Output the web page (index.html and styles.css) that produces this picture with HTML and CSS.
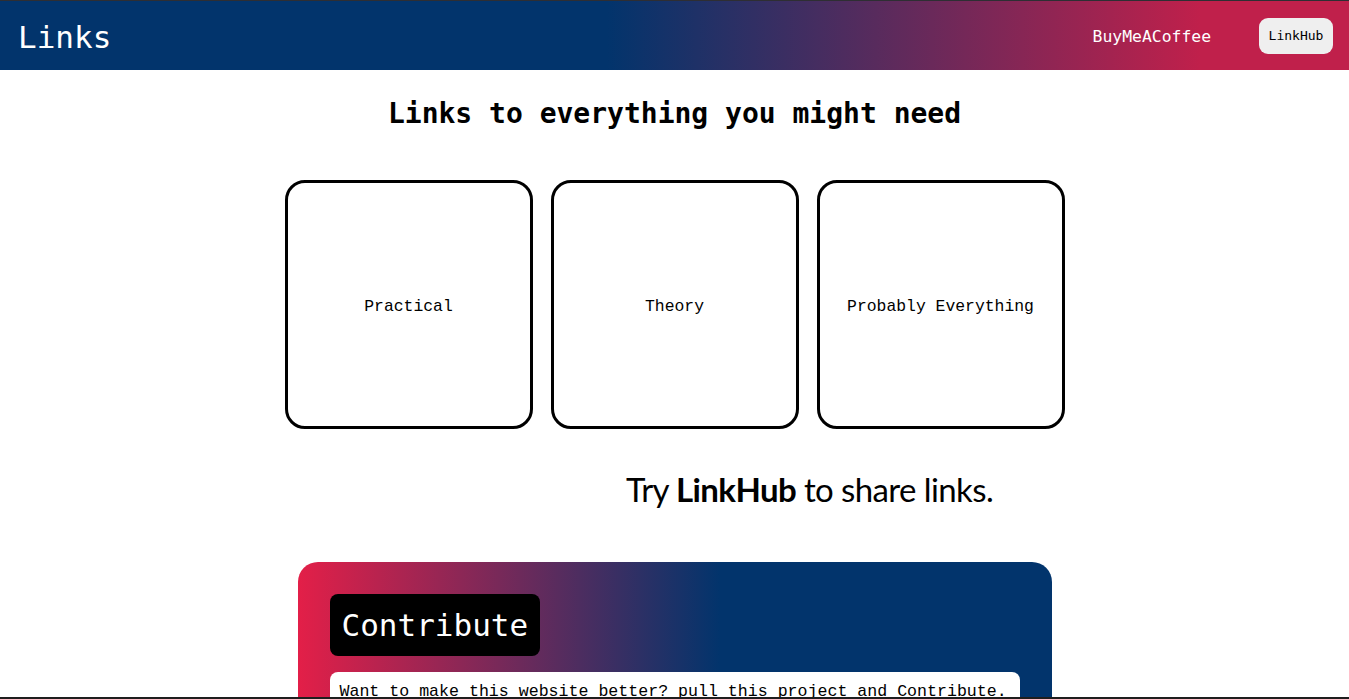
FILE: index.html
```html
<!DOCTYPE html>
<html lang="en">
<head>
<meta charset="utf-8">
<title>Links</title>
<link rel="stylesheet" href="styles.css">
</head>
<body>
<header class="navbar">
  <div class="brand">Links</div>
  <nav class="nav-links">
    <a class="nav-link" href="#">BuyMeACoffee</a>
    <a class="nav-button" href="#">LinkHub</a>
  </nav>
</header>
<main class="main">
  <h1 class="title">Links to everything you might need</h1>
  <section class="cards">
    <a class="card" href="#">Practical</a>
    <a class="card" href="#">Theory</a>
    <a class="card" href="#">Probably Everything</a>
  </section>
  <p class="promo">Try <strong>LinkHub</strong> to share links.</p>
  <section class="contribute">
    <h2 class="contribute-title">Contribute</h2>
    <div class="contribute-body">Want to make this website better? pull this project and Contribute.</div>
  </section>
</main>
<div class="frame-bottom"></div>
</body>
</html>
```
FILE: styles.css
```css
html, body {
  margin: 0;
  padding: 0;
}
body {
  background: #ffffff;
  border-top: 1px solid #2e2e33;
  font-family: "DejaVu Sans Mono", monospace;
  color: #000;
}
.navbar {
  height: 69px;
  display: flex;
  align-items: center;
  justify-content: space-between;
  padding: 0 16px 0 18px;
  background: linear-gradient(to right, #02346c 0%, #02346c 45%, #c0204b 89%, #c0204b 100%);
}
.brand {
  color: #fff;
  font-family: "DejaVu Sans Mono", monospace;
  font-weight: 300;
  font-size: 31px;
  margin-top: 2px;
}
.nav-links {
  display: flex;
  align-items: center;
  gap: 48px;
}
.nav-link {
  color: #fff;
  text-decoration: none;
  font-family: "DejaVu Sans Mono", monospace;
  font-size: 16.4px;
  margin-top: 2px;
}
.nav-button {
  display: flex;
  align-items: center;
  justify-content: center;
  width: 74px;
  height: 36px;
  border-radius: 9px;
  background: #efefef;
  color: #000;
  text-decoration: none;
  font-family: "DejaVu Sans Mono", monospace;
  font-size: 13px;
}
.main {
  display: flex;
  flex-direction: column;
  align-items: center;
}
.title {
  margin: 26px 0 0;
  font-family: "DejaVu Sans Mono", monospace;
  font-weight: bold;
  font-size: 28px;
  line-height: 36px;
}
.cards {
  display: flex;
  gap: 18px;
  margin-top: 48px;
}
.card {
  box-sizing: border-box;
  width: 248px;
  height: 249px;
  padding-top: 3px;
  border: 3px solid #000;
  border-radius: 20px;
  display: flex;
  align-items: center;
  justify-content: center;
  color: #000;
  text-decoration: none;
  font-family: "Liberation Mono", monospace;
  font-size: 16.4px;
}
.promo {
  margin: 40px 0 0 270px;
  font-family: Lato, sans-serif;
  font-size: 33px;
  line-height: 40px;
  letter-spacing: -0.6px;
}
.promo strong {
  font-weight: bold;
}
.contribute {
  box-sizing: border-box;
  width: 754px;
  margin-top: 53px;
  padding: 32px;
  border-radius: 20px;
  background: linear-gradient(to right, #e31f48 0%, #02346c 56%, #02346c 100%);
  display: flex;
  flex-direction: column;
  align-items: flex-start;
  gap: 16px;
}
.contribute-title {
  margin: 0;
  height: 62px;
  padding: 0 12px;
  display: flex;
  align-items: center;
  background: #000;
  color: #fff;
  border-radius: 8px;
  font-family: "DejaVu Sans Mono", monospace;
  font-weight: normal;
  font-size: 31px;
}
.contribute-body {
  box-sizing: border-box;
  width: 100%;
  background: #fff;
  border-radius: 8px;
  padding: 10px 10px 40px;
  font-family: "Liberation Mono", monospace;
  font-size: 16.6px;
  line-height: 20px;
}
.frame-bottom {
  position: fixed;
  left: 0;
  right: 0;
  bottom: 0;
  height: 2px;
  background: #1e1e1e;
}
```
